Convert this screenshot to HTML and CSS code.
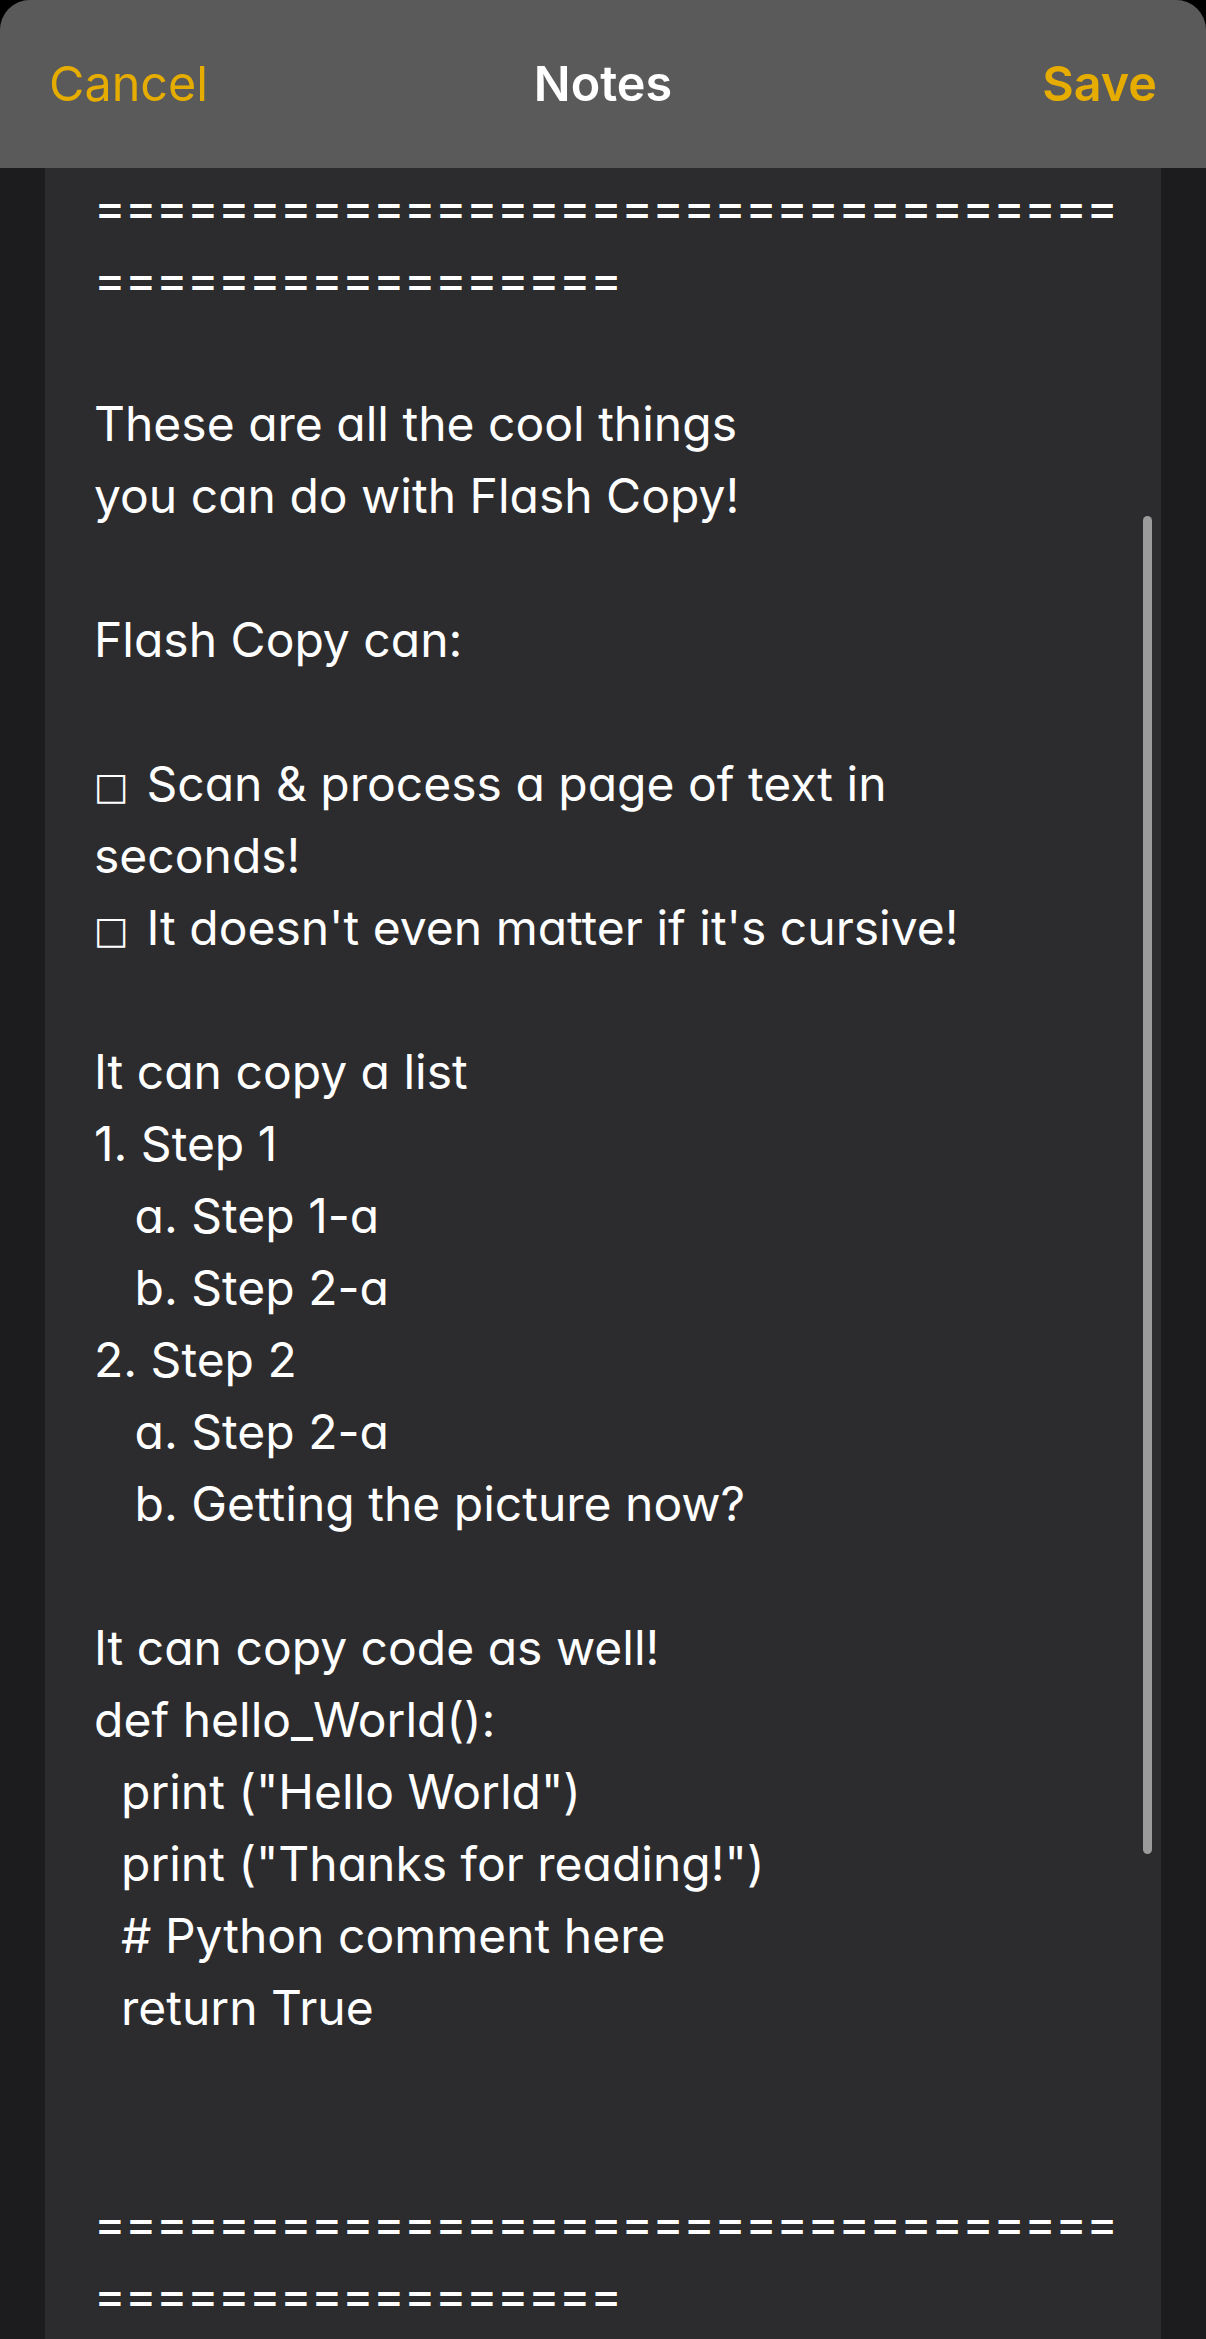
FILE: index.html
```html
<!DOCTYPE html>
<html lang="en">
<head>
<meta charset="utf-8">
<title>Notes</title>
<link rel="stylesheet" href="styles.css">
</head>
<body>
<div class="sheet">
  <header class="navbar">
    <span class="nav-btn cancel">Cancel</span>
    <span class="nav-title">Notes</span>
    <span class="nav-btn save">Save</span>
  </header>
  <main class="panel">
    <div class="note"><span class="rule">=================================</span>
<span class="rule">=================</span>

These are all the cool things
you can do with Flash Copy!

Flash Copy can:

<span class="box">□</span> Scan &amp; process a page of text in
seconds!
<span class="box">□</span> It doesn't even matter if it's cursive!

It can copy a list
1. Step 1
   a. Step 1-a
   b. Step 2-a
2. Step 2
   a. Step 2-a
   b. Getting the picture now?

It can copy code as well!
def hello_World():
  print ("Hello World")
  print ("Thanks for reading!")
  # Python comment here
  return True


<span class="rule">=================================</span>
<span class="rule">=================</span>
</div>
    <div class="scrollbar"></div>
  </main>
</div>
</body>
</html>
```

FILE: styles.css
```css
html, body {
  margin: 0;
  padding: 0;
}
body {
  background: #000;
  width: 1206px;
  height: 2339px;
  overflow: hidden;
  font-family: "Inter", "Liberation Sans", sans-serif;
}
.sheet {
  background: #1c1c1e;
  border-radius: 30px 30px 0 0;
  height: 2339px;
  display: flex;
  flex-direction: column;
}
.navbar {
  height: 168px;
  flex: none;
  background: #5a5a5a;
  border-radius: 30px 30px 0 0;
  display: flex;
  align-items: center;
  justify-content: space-between;
  padding: 0 49px 0 49px;
  box-sizing: border-box;
  position: relative;
}
.nav-btn {
  font-size: 48.5px;
  color: #e6ad00;
  line-height: 1;
}
.save {
  font-weight: 600;
}
.nav-title {
  position: absolute;
  left: 0;
  right: 0;
  text-align: center;
  font-size: 48.5px;
  font-weight: 600;
  color: #fff;
  line-height: 1;
  pointer-events: none;
}
.panel {
  flex: 1;
  margin: 0 45px;
  background: #2c2c2e;
  position: relative;
  padding: 4px 0 0 49px;
}
.note {
  white-space: pre;
  color: #fff;
  font-size: 48px;
  line-height: 72px;
  font-feature-settings: "cv11" 1;
}
.rule {
  letter-spacing: -0.75px;
}
.box {
  font-family: "DejaVu Sans", sans-serif;
  font-size: 37px;
  line-height: 1;
  margin-right: 4px;
  position: relative;
  top: -2px;
}
.scrollbar {
  position: absolute;
  left: 1098px;
  top: 348px;
  width: 9px;
  height: 1338px;
  border-radius: 5px;
  background: #9b9b9b;
}
```
